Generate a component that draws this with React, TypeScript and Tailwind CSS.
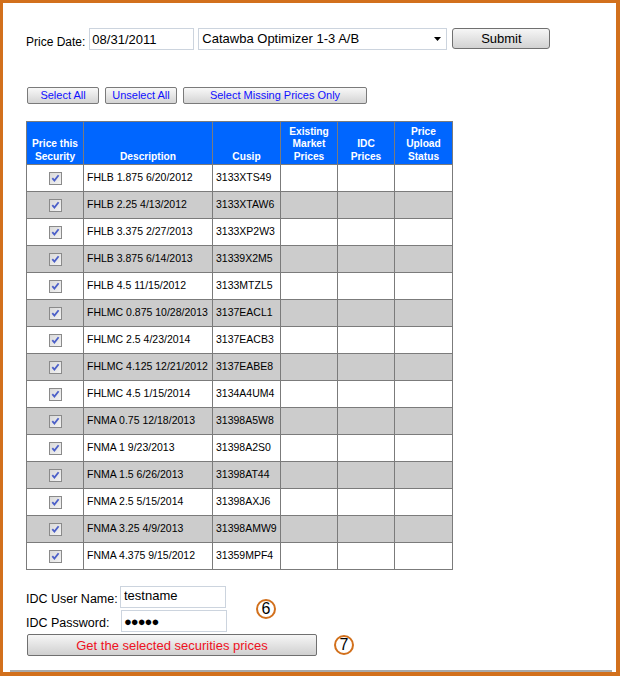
import React from "react";

interface Security {
  desc: string;
  cusip: string;
}

const securities: Security[] = [
  { desc: "FHLB 1.875 6/20/2012", cusip: "3133XTS49" },
  { desc: "FHLB 2.25 4/13/2012", cusip: "3133XTAW6" },
  { desc: "FHLB 3.375 2/27/2013", cusip: "3133XP2W3" },
  { desc: "FHLB 3.875 6/14/2013", cusip: "31339X2M5" },
  { desc: "FHLB 4.5 11/15/2012", cusip: "3133MTZL5" },
  { desc: "FHLMC 0.875 10/28/2013", cusip: "3137EACL1" },
  { desc: "FHLMC 2.5 4/23/2014", cusip: "3137EACB3" },
  { desc: "FHLMC 4.125 12/21/2012", cusip: "3137EABE8" },
  { desc: "FHLMC 4.5 1/15/2014", cusip: "3134A4UM4" },
  { desc: "FNMA 0.75 12/18/2013", cusip: "31398A5W8" },
  { desc: "FNMA 1 9/23/2013", cusip: "31398A2S0" },
  { desc: "FNMA 1.5 6/26/2013", cusip: "31398AT44" },
  { desc: "FNMA 2.5 5/15/2014", cusip: "31398AXJ6" },
  { desc: "FNMA 3.25 4/9/2013", cusip: "31398AMW9" },
  { desc: "FNMA 4.375 9/15/2012", cusip: "31359MPF4" },
];

// old XP style greyed checkbox
function CheckBox() {
  return (
    <svg width="13" height="13" viewBox="0 0 13 13" className="mx-auto block">
      <defs>
        <linearGradient id="cbfill" x1="0" y1="0" x2="1" y2="1">
          <stop offset="0" stopColor="#d8d8d8" />
          <stop offset="1" stopColor="#f4f4f4" />
        </linearGradient>
      </defs>
      <rect x="0.5" y="0.5" width="12" height="12" fill="url(#cbfill)" stroke="#8a8a8a" />
      <path d="M3.3 6.2 L5.4 8.6 L9.6 3.2" fill="none" stroke="#4b5fc8" strokeWidth="1.8" />
    </svg>
  );
}

function Circled({ n }: { n: string }) {
  return (
    <div className="w-[20px] h-[20px] rounded-full border-[2.5px] border-[#d2701c] bg-white flex items-center justify-center text-[16px] leading-none text-black">
      {n}
    </div>
  );
}

const btn =
  "h-[17px] rounded-[2px] border border-[#7a7a7a] bg-linear-to-b from-[#f8f8f8] to-[#d4d4d4] text-[11px] leading-none text-[#1010ff] flex items-center justify-center";

const cell = "border border-[#7b7b7b]";
const head = "border border-[#7b7b7b] align-bottom pb-[1px] font-bold";

export default function App() {
  return (
    <div className="w-[620px] h-[676px] bg-white border-[#d2701c] border-l-[3px] border-t-[3px] border-r-4 border-b-4 relative font-['Liberation_Sans',Arial,sans-serif] text-black">
      <div className="pl-[23px] pt-[25px]">
        {/* Price date row */}
        <div className="flex items-center h-[22px]">
          <span className="text-[12px] mt-[5px]">Price Date:</span>
          <input
            readOnly
            value="08/31/2011"
            className="ml-[4px] w-[105px] h-[22px] border border-[#ccd4de] px-[2px] text-[13px] outline-none"
          />
          <div className="ml-[4px] w-[249px] h-[22px] border border-[#ccd4de] pl-[3px] pr-[5px] flex items-center justify-between text-[13px]">
            <span>Catawba Optimizer 1-3 A/B</span>
            <svg width="7" height="4" viewBox="0 0 7 4">
              <path d="M0 0 H7 L3.5 4 Z" fill="#000" />
            </svg>
          </div>
          <button className="ml-[5px] -mt-[2px] w-[98px] h-[21px] rounded-[3px] border border-[#707070] bg-linear-to-b from-[#f6f6f6] to-[#d2d2d2] text-[13px] leading-none">
            Submit
          </button>
        </div>

        {/* selection buttons */}
        <div className="flex mt-[37px] ml-px gap-[6px]">
          <button className={btn + " w-[72px]"}>Select All</button>
          <button className={btn + " w-[72px]"}>Unselect All</button>
          <button className={btn + " w-[184px]"}>Select Missing Prices Only</button>
        </div>

        {/* securities table */}
        <table className="mt-[17px] w-[426px] border-collapse table-fixed">
          <colgroup>
            <col className="w-[57px]" />
            <col className="w-[129px]" />
            <col className="w-[68px]" />
            <col className="w-[57px]" />
            <col className="w-[57px]" />
            <col className="w-[58px]" />
          </colgroup>
          <thead>
            <tr className="h-[43px] bg-[#0066ff] text-white text-[10.2px] font-bold leading-[12.5px]">
              <th className={head}>Price this<br />Security</th>
              <th className={head}>Description</th>
              <th className={head}>Cusip</th>
              <th className={head}>Existing<br />Market<br />Prices</th>
              <th className={head}>IDC<br />Prices</th>
              <th className={head}>Price<br />Upload<br />Status</th>
            </tr>
          </thead>
          <tbody>
            {securities.map((s, i) => (
              <tr key={s.cusip} className={`h-[27px] text-[10.5px] ${i % 2 === 1 ? "bg-[#cccccc]" : "bg-white"}`}>
                <td className={cell + " pt-px"}>
                  <CheckBox />
                </td>
                <td className={cell + " pl-[3px] whitespace-nowrap"}>{s.desc}</td>
                <td className={cell + " pl-[3px] whitespace-nowrap"}>{s.cusip}</td>
                <td className={cell}></td>
                <td className={cell}></td>
                <td className={cell}></td>
              </tr>
            ))}
          </tbody>
        </table>

        {/* IDC credentials */}
        <div className="mt-[16px] flex items-center h-[22px]">
          <span className="w-[94px] text-[12.5px] mt-[4px]">IDC User Name:</span>
          <input
            readOnly
            value="testname"
            className="w-[106px] h-[22px] border border-[#ccd4de] px-[3px] pb-[3px] text-[13px] outline-none"
          />
        </div>
        <div className="mt-[2px] flex items-center h-[22px]">
          <span className="w-[95px] text-[12.5px] mt-[4px]">IDC Password:</span>
          <div className="w-[106px] h-[22px] border border-[#ccd4de] pl-[2px] flex items-center text-[13px] tracking-[-1px] leading-none">
            ●●●●●
          </div>
        </div>
        <button className="mt-[2px] ml-[1px] w-[290px] h-[22px] rounded-[2px] border border-[#707070] bg-linear-to-b from-[#f6f6f6] to-[#d0d0d0] text-[13px] leading-none text-[#ee1122]">
          Get the selected securities prices
        </button>
      </div>

      <div className="mt-[13px] ml-[7px] w-[602px] h-[2px] bg-[#a9a9a9]"></div>

      {/* annotation markers */}
      <div className="absolute left-[253px] top-[596px]">
        <Circled n="6" />
      </div>
      <div className="absolute left-[331px] top-[632px]">
        <Circled n="7" />
      </div>
    </div>
  );
}
